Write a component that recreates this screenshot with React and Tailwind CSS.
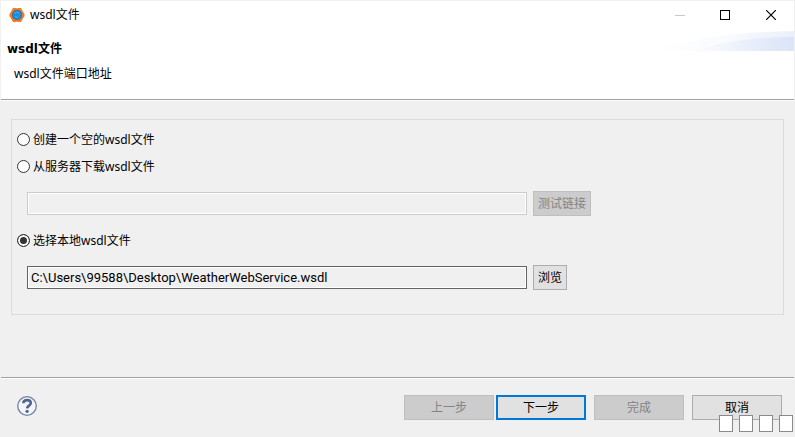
import { useState } from "react";

const AppIcon = () => (
  <svg className="w-4 h-4 shrink-0" viewBox="0 0 16 16" aria-hidden="true">
    <path d="M4 1h3.400l.6.700.6-.7H12l1.600 3L15.500 7v2l-1.900 3L12 15H8.600L8 14.300l-.6.700H4l-1.600-3L.5 9V7l1.900-3z" fill="#f07a28" />
    <circle cx="8" cy="8" r="5" fill="#3f648a" />
    <circle cx="8" cy="8" r="4.200" fill="#1a8fe0" />
    <path d="M5.500 6.500 8 5l2.500 2M6 9.500l3 1" stroke="#45b0f4" strokeWidth="1" fill="none" />
  </svg>
);

//  Minimize / maximize / close
const WindowControls = () => (
  <div className="flex h-7">
    <button type="button" aria-label="最小化" disabled className="w-[44px] flex items-center justify-center">
      <svg width="10" height="10" viewBox="0 0 10 10" shapeRendering="crispEdges">
        <path d="M0 5h10v1H0z" fill="#c8c8c8" />
      </svg>
    </button>
    <button type="button" aria-label="最大化" className="w-[46px] flex items-center justify-center">
      <svg width="10" height="10" viewBox="0 0 10 10">
        <rect x=".5" y=".5" width="9" height="9" fill="none" stroke="#000" />
      </svg>
    </button>
    <button type="button" aria-label="关闭" className="w-[46px] flex items-center justify-center">
      <svg width="10" height="10" viewBox="0 0 10 10">
        <path d="M0 0l10 10M10 0L0 10" stroke="#000" strokeWidth="1.200" />
      </svg>
    </button>
  </div>
);

const HeaderSwoosh = () => (
  <svg className="absolute right-0 top-[30px] w-[140px] h-5" viewBox="0 0 140 20" aria-hidden="true">
    <defs>
      <linearGradient id="swoosh">
        <stop offset="0" stopColor="#fff" />
        <stop offset=".5" stopColor="#f9fbfe" />
        <stop offset="1" stopColor="#eaf0fb" />
      </linearGradient>
      <linearGradient id="swooshDeep">
        <stop offset="0" stopColor="#e4ebfa" stopOpacity="0" />
        <stop offset="1" stopColor="#dce4f8" />
      </linearGradient>
    </defs>
    <path d="M0 20C40 7 85 1 140 0v20z" fill="url(#swoosh)" />
    <path d="M40 20C70 10 100 6 140 6v14z" fill="url(#swooshDeep)" />
  </svg>
);

const HelpIcon = () => (
  <svg width="20" height="20" viewBox="0 0 20 20" aria-hidden="true">
    <circle cx="10" cy="10" r="9.300" fill="#f4f5f7" stroke="#6f82a6" strokeWidth="1.300" />
    <path d="M6.300 7.200C6.300 5 7.900 4.100 10 4.100s3.800 1.100 3.800 3c0 2.500-3.600 2.500-3.700 5.300" fill="none" stroke="#4f648f" strokeWidth="2.600" />
    <circle cx="10.100" cy="15.300" r="1.600" fill="#4f648f" />
  </svg>
);

const Radio = ({ value, selected, onSelect, children }) => (
  <label className="flex items-start gap-[3px] h-5">
    <input
      type="radio"
      name="source"
      value={value}
      checked={selected}
      onChange={() => onSelect(value)}
      className="appearance-none w-[13px] h-[13px] mt-[3px] shrink-0 rounded-full border border-[#333] bg-white checked:border-[#333] checked:bg-[#333] checked:shadow-[inset_0_0_0_2px_#fff]"
    />
    <span className="leading-[20px]">{children}</span>
  </label>
);

const PathInput = ({ className = "", ...props }) => (
  <input
    type="text"
    className={`w-[500px] h-[23px] min-w-0 px-[3px] border border-[#646464] bg-[#f0f0f0] shadow-[inset_0_0_0_1px_#fff] disabled:border-[#ccc] text-[13px] font-['Roboto','Noto_Sans_CJK_SC',sans-serif] ${className}`}
    {...props}
  />
);

const Button = ({ primary, className = "", ...props }) => (
  <button
    type="button"
    className={`h-[25px] shrink-0 bg-[#e1e1e1] disabled:border-[#bfbfbf] disabled:bg-[#ccc] disabled:text-[#838383] ${
      primary ? "border-2 border-[#0078d7]" : "border border-[#adadad]"
    } ${className}`}
    {...props}
  />
);

export default function App() {
  const [source, setSource] = useState("local");

  return (
    <div className="min-h-screen flex flex-col border border-[#f0f0f0] bg-[#f0f0f0] text-black text-[12px] leading-[16px] font-['Noto_Sans','Noto_Sans_CJK_SC',sans-serif]">
      <header className="relative bg-white border-b border-[#a0a0a0] pb-[17px]">
        <HeaderSwoosh />
        <div className="flex items-center justify-between">
          <div className="flex items-center gap-[5px] pl-2">
            <AppIcon />
            <span>wsdl文件</span>
          </div>
          <WindowControls />
        </div>
        <h1 className="mt-3 pl-[6px] font-bold font-['DejaVu_Sans','Noto_Sans_CJK_SC',sans-serif]">wsdl文件</h1>
        <p className="mt-[9px] pl-[13px]">wsdl文件端口地址</p>
      </header>

      <main className="flex-1 border-t border-white px-[10px] pt-[18px]">
        <div className="border border-[#dcdcdc] px-[5px] pt-[10px] pb-6">
          <Radio value="empty" selected={source === "empty"} onSelect={setSource}>创建一个空的wsdl文件</Radio>
          <div className="mt-[7px]">
            <Radio value="server" selected={source === "server"} onSelect={setSource}>从服务器下载wsdl文件</Radio>
          </div>
          <div className="mt-[14px] pl-[10px] flex items-center gap-[6px]">
            <PathInput aria-label="服务器地址" disabled={source !== "server"} />
            <Button disabled={source !== "server"} className="w-[58px]">测试链接</Button>
          </div>
          <div className="mt-[15px]">
            <Radio value="local" selected={source === "local"} onSelect={setSource}>选择本地wsdl文件</Radio>
          </div>
          <div className="mt-[14px] pl-[10px] flex items-center gap-[6px]">
            <PathInput aria-label="本地文件" readOnly value="C:\Users\99588\Desktop\WeatherWebService.wsdl" />
            <Button className="w-[34px]">浏览</Button>
          </div>
        </div>
      </main>

      <footer className="relative border-t border-[#a0a0a0]">
        <div className="border-t border-white flex items-start justify-between pl-4 pr-3 pt-4 pb-4">
          <button type="button" aria-label="帮助" className="mt-px">
            <HelpIcon />
          </button>
          <div className="flex gap-2">
            <div className="flex gap-[2px]">
              <Button disabled className="w-[90px]">上一步</Button>
              <Button primary className="w-[90px]">下一步</Button>
            </div>
            <Button disabled className="w-[90px]">完成</Button>
            <Button className="w-[90px]">取消</Button>
          </div>
        </div>
        <div className="absolute right-px bottom-1 flex gap-[6px]" aria-hidden="true">
          {Array.from({ length: 4 }).map((_, i) => (
            <div key={i} className="w-[14px] h-[17px] border border-[#8a8a8a] bg-white" />
          ))}
        </div>
      </footer>
    </div>
  );
}
